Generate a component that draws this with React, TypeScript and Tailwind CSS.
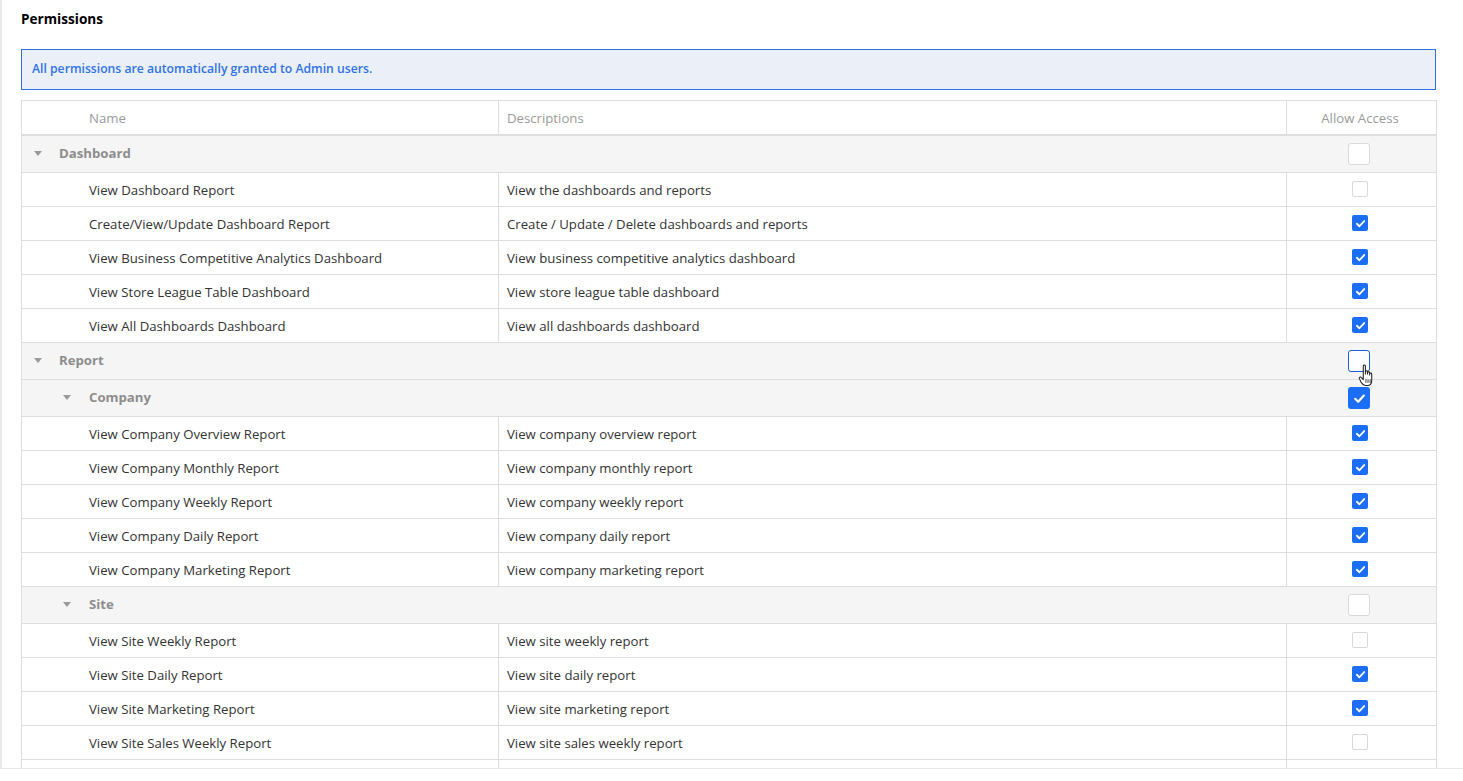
import React from "react"

type Row =
  | { kind: "group"; label: string; level: number; checked: boolean; hover?: boolean }
  | { kind: "item"; name: string; desc: string; checked: boolean }

const rows: Row[] = [
  { kind: "group", label: "Dashboard", level: 0, checked: false },
  { kind: "item", name: "View Dashboard Report", desc: "View the dashboards and reports", checked: false },
  { kind: "item", name: "Create/View/Update Dashboard Report", desc: "Create / Update / Delete dashboards and reports", checked: true },
  { kind: "item", name: "View Business Competitive Analytics Dashboard", desc: "View business competitive analytics dashboard", checked: true },
  { kind: "item", name: "View Store League Table Dashboard", desc: "View store league table dashboard", checked: true },
  { kind: "item", name: "View All Dashboards Dashboard", desc: "View all dashboards dashboard", checked: true },
  { kind: "group", label: "Report", level: 0, checked: false, hover: true },
  { kind: "group", label: "Company", level: 1, checked: true },
  { kind: "item", name: "View Company Overview Report", desc: "View company overview report", checked: true },
  { kind: "item", name: "View Company Monthly Report", desc: "View company monthly report", checked: true },
  { kind: "item", name: "View Company Weekly Report", desc: "View company weekly report", checked: true },
  { kind: "item", name: "View Company Daily Report", desc: "View company daily report", checked: true },
  { kind: "item", name: "View Company Marketing Report", desc: "View company marketing report", checked: true },
  { kind: "group", label: "Site", level: 1, checked: false },
  { kind: "item", name: "View Site Weekly Report", desc: "View site weekly report", checked: false },
  { kind: "item", name: "View Site Daily Report", desc: "View site daily report", checked: true },
  { kind: "item", name: "View Site Marketing Report", desc: "View site marketing report", checked: true },
  { kind: "item", name: "View Site Sales Weekly Report", desc: "View site sales weekly report", checked: false },
  { kind: "item", name: "View Site Sales Daily Report", desc: "View site sales daily report", checked: true },
]

function Check({ size }: { size: "sm" | "lg" }) {
  const cls = size === "lg" ? "w-[13px] h-[13px]" : "w-[11px] h-[11px]"
  return (
    <svg viewBox="0 0 12 12" className={cls} fill="none">
      <path d="M2 6.3 L4.8 9 L10 3.3" stroke="white" strokeWidth="2" strokeLinecap="round" strokeLinejoin="round" />
    </svg>
  )
}

function Box({ checked, size, hover }: { checked: boolean; size: "sm" | "lg"; hover?: boolean }) {
  const dim = size === "lg" ? "w-[22px] h-[22px] rounded-[3px]" : "w-4 h-4 rounded-[2px]"
  if (checked) {
    return (
      <div className={`${dim} bg-[#1b6ef5] flex items-center justify-center`}>
        <Check size={size} />
      </div>
    )
  }
  return (
    <div
      className={`${dim} bg-white border ${hover ? "border-[#1b5fd6]" : "border-[#d9d9d9]"}`}
    />
  )
}

function HandCursor() {
  return (
    <svg viewBox="0 0 18 24" className="absolute left-[1358px] top-[363px] w-[19px] h-[26px]">
      <path
        d="M5 2.5 C5 1.3 7 1.3 7 2.5 L7 10 L7 8 C7 6.8 9 6.8 9 8 L9 10 L9 9 C9 7.8 11 7.8 11 9 L11 11 L11 10 C11 8.8 13 8.8 13 10 L13 16 C13 19 11.5 21 9 21 L7 21 C5 21 4 19.5 3 18 L1.3 14.5 C0.8 13.4 2.3 12.4 3.2 13.5 L5 15.5 Z"
        fill="white"
        stroke="#222"
        strokeWidth="1"
        strokeLinejoin="round"
      />
      <path d="M7.5 15 L7.5 18.5 M9.5 15 L9.5 18.5 M11.5 15 L11.5 18.5" stroke="#222" strokeWidth="0.8" />
    </svg>
  )
}

export default function App() {
  return (
    <div className="w-[1463px] h-[781px] bg-white overflow-hidden relative font-['Open_Sans',sans-serif]">
      <div className="h-[769px] border-l-2 border-b border-[#e8e8e8] overflow-hidden pl-[19px] pr-[27px]">
        <h1 className="pt-[10px] h-[49px] text-[13.6px] font-bold text-black leading-[18px]">Permissions</h1>
        <div className="h-[41px] border border-[#2d6fdc] bg-[#ebf0f8] flex items-center px-[10px] text-[12.2px] font-semibold text-[#2f72e8]">
          All permissions are automatically granted to Admin users.
        </div>
        <div className="mt-[10px] border border-[#dedede] w-[1416px]">
          <div className="flex h-[35px] border-b-2 border-[#dedede] text-[13.2px] text-[#9a9a9a]">
            <div className="w-[476px] pl-[67px] pt-[2px] flex items-center">Name</div>
            <div className="w-[788px] border-l border-[#dedede] pl-2 pt-[2px] flex items-center">Descriptions</div>
            <div className="flex-1 border-l border-[#dedede] flex items-center justify-center pr-[3px] pt-[2px]">Allow Access</div>
          </div>
          {rows.map((r, i) =>
            r.kind === "group" ? (
              <div key={i} className="flex h-[37px] bg-[#f5f5f5] border-b border-[#dedede] items-center">
                <div className={`flex items-center ${r.level === 0 ? "pl-[12px]" : "pl-[41px]"} flex-1`}>
                  <svg viewBox="0 0 8 5" className="w-[8px] h-[5px] mr-[17px]">
                    <path d="M0 0 L8 0 L4 5 Z" fill="#9a9a9a" />
                  </svg>
                  <span className={`text-[13.2px] font-bold text-[#8d8d8d] ${r.level === 1 ? "ml-[1px]" : ""}`}>{r.label}</span>
                </div>
                <div className="w-[150px] flex justify-center pr-[4px]">
                  <Box checked={r.checked} size="lg" hover={r.hover} />
                </div>
              </div>
            ) : (
              <div key={i} className="flex h-[34px] border-b border-[#dedede] text-[13.2px] text-[#333]">
                <div className="w-[476px] pl-[67px] pt-[2px] flex items-center">{r.name}</div>
                <div className="w-[788px] border-l border-[#dedede] pl-2 pt-[2px] flex items-center">{r.desc}</div>
                <div className="flex-1 border-l border-[#dedede] flex items-center justify-center pr-[3px] pb-[1px]">
                  <Box checked={r.checked} size="sm" />
                </div>
              </div>
            )
          )}
        </div>
      </div>
      <HandCursor />
    </div>
  )
}
